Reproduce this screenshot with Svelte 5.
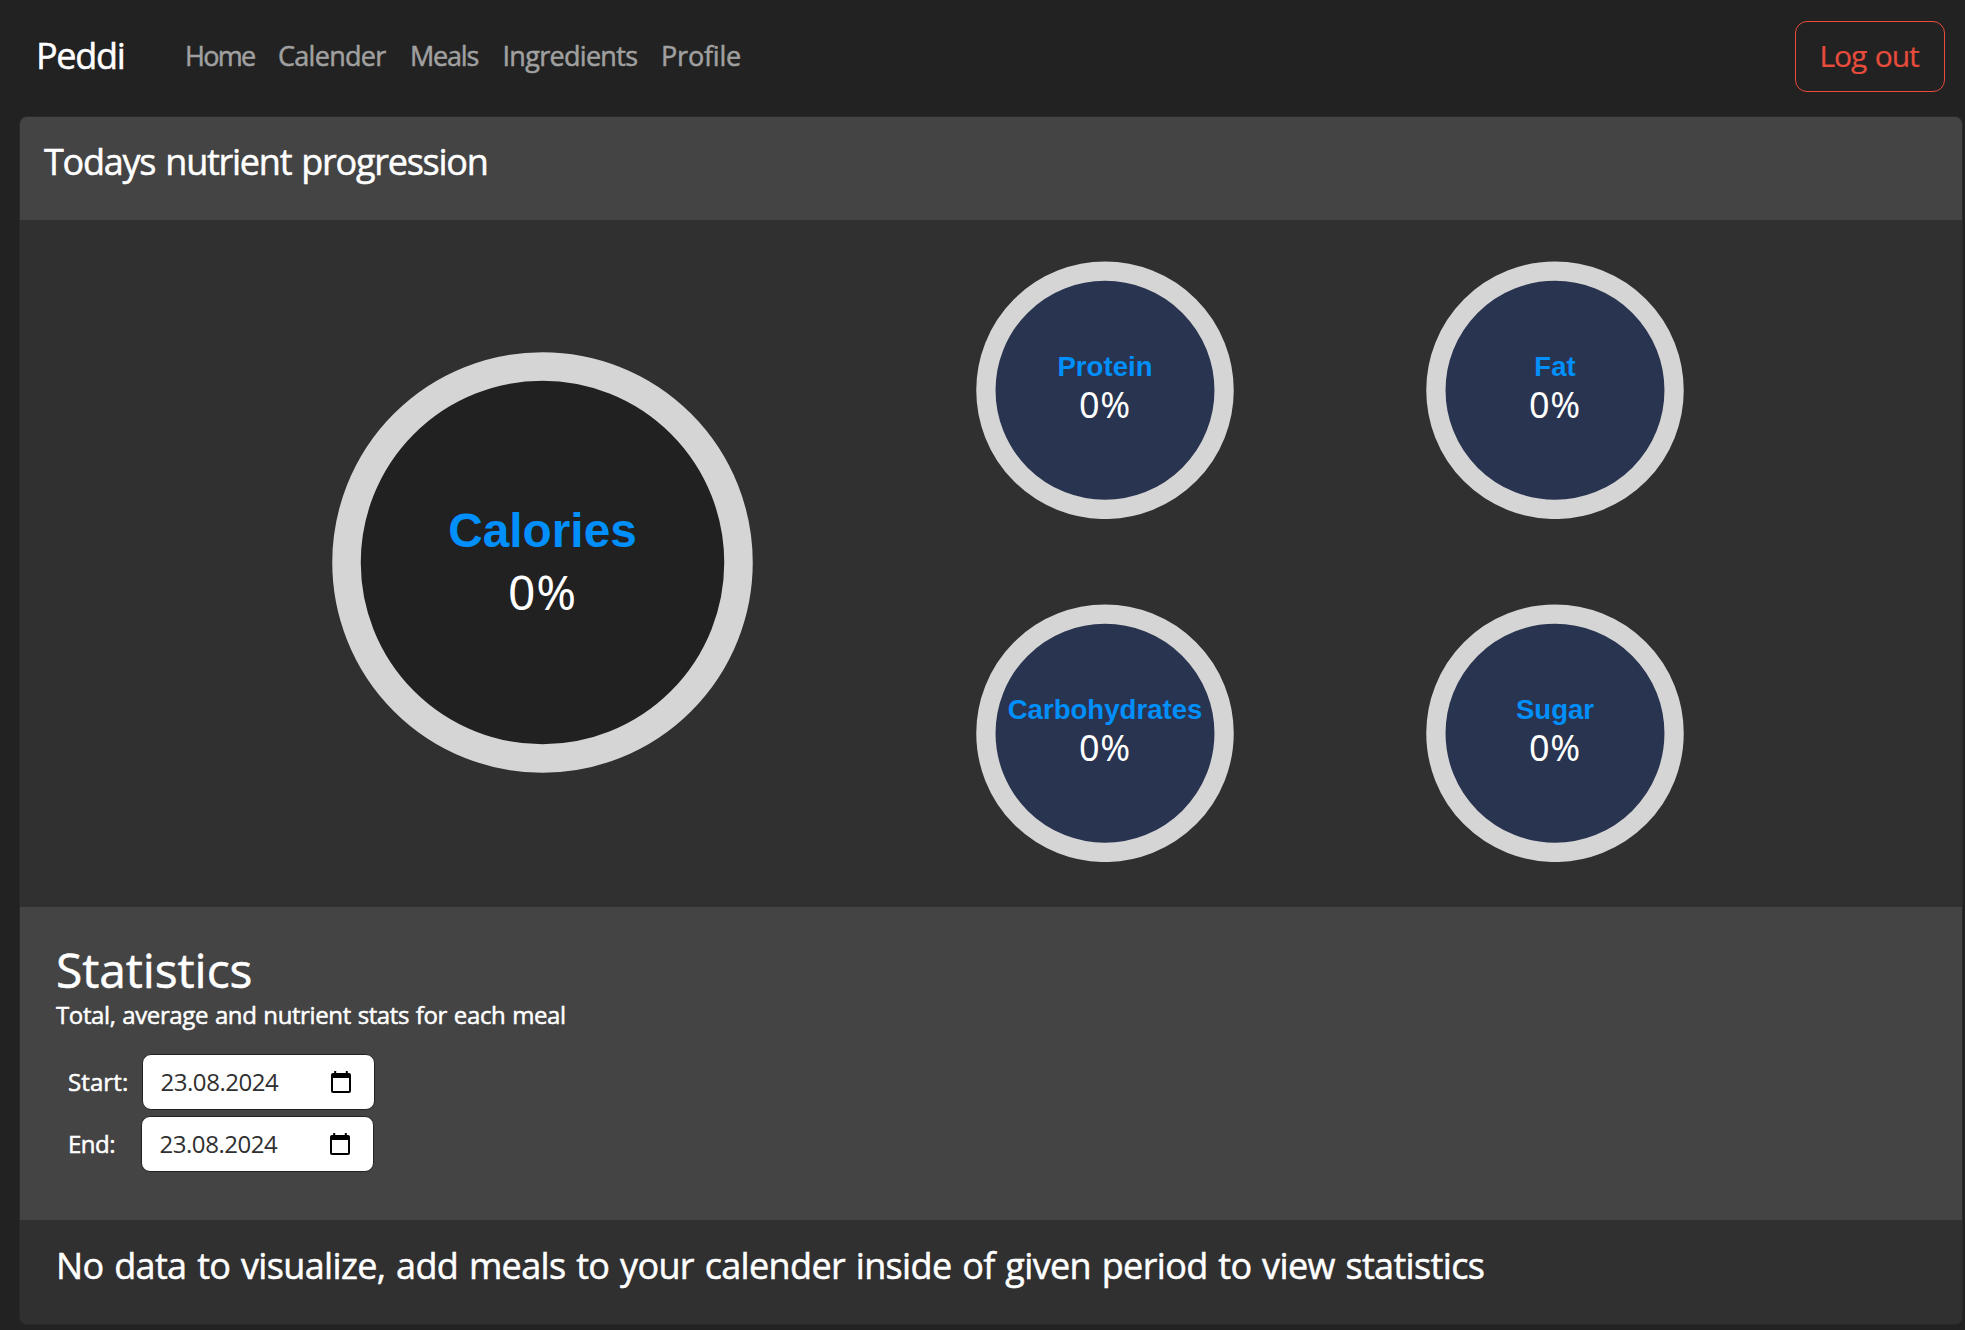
<script>
  const links = ['Home', 'Calender', 'Meals', 'Ingredients', 'Profile'];
  const nutrients = ['Protein', 'Fat', 'Carbohydrates', 'Sugar'];
  const dates = [
    { label: 'Start:', id: 'start', value: '23.08.2024' },
    { label: 'End:', id: 'end', value: '23.08.2024' }
  ];
</script>

<nav class="navbar">
  <a class="brand" href="#home">Peddi</a>
  <div class="links">
    {#each links as link}
      <a class={link.toLowerCase()} href="#{link.toLowerCase()}">{link}</a>
    {/each}
  </div>
  <button class="logout" type="button">Log out</button>
</nav>

<main class="card">
  <header class="card-header">
    <h2>Todays nutrient progression</h2>
  </header>

  <section class="charts">
    <svg class="ring main-ring" width="421" height="421" viewBox="0 0 421 421">
      <circle class="core dark" cx="210.5" cy="210.5" r="182" />
      <circle class="track wide" cx="210.5" cy="210.5" r="196" />
      <text class="name" x="210.5" y="194.7">Calories</text>
      <text class="value" x="210.5" y="257.7">0%</text>
    </svg>
    <div class="small-rings">
      {#each nutrients as name}
        <svg class="ring small" width="258" height="258" viewBox="0 0 258 258">
          <circle class="core blue" cx="129" cy="129.3" r="110" />
          <circle class="track" cx="129" cy="129.3" r="119.1" />
          <text class="name" x="129" y="115">{name}</text>
          <text class="value" x="129" y="156.7">0%</text>
        </svg>
      {/each}
    </div>
  </section>

  <section class="stats">
    <h1>Statistics</h1>
    <p>Total, average and nutrient stats for each meal</p>
    <div class="dates">
      {#each dates as date}
        <div class="date-row {date.id}">
          <span class="label">{date.label}</span>
          <div class="date-input">
            <span>{date.value}</span>
            <svg width="20" height="22" viewBox="0 0 20 22">
              <path
                fill-rule="evenodd"
                d="M3.200 0h2v2h9.600V0h2v2H18a2 2 0 0 1 2 2V20a2 2 0 0 1-2 2H2a2 2 0 0 1-2-2V4a2 2 0 0 1 2-2h1.200zM2 7V20H18V7z"
              />
            </svg>
          </div>
        </div>
      {/each}
    </div>
  </section>

  <footer class="message">
    <h2>No data to visualize, add meals to your calender inside of given period to view statistics</h2>
  </footer>
</main>

<style>
  :global(body) {
    background: #222;
    color: #fff;
    font-family: 'Trebuchet MS', 'Open Sans', sans-serif;
  }

  h1,
  h2,
  p {
    margin: 0;
    font-weight: 400;
  }

  /* Slightly sturdier strokes for light text on dark panels */
  h1,
  h2,
  p,
  .brand,
  .links,
  .label {
    -webkit-text-stroke: 0.5px currentColor;
  }

  a {
    text-decoration: none;
  }

  .navbar {
    box-sizing: border-box;
    display: flex;
    align-items: center;
    height: 116px;
    padding: 0 20px 6px 36px;
  }

  .brand {
    width: 149px;
    color: #fff;
    font-size: 36px;
    letter-spacing: -1.3px;
  }

  .links {
    display: flex;
    flex: 1;
    font-size: 27px;
    letter-spacing: -0.7px;
  }

  .links a {
    color: #a0a0a0;
  }

  .home {
    width: 93px;
    letter-spacing: -1.7px;
  }

  .calender {
    width: 132px;
  }

  .meals {
    width: 92.500px;
    letter-spacing: -1.2px;
  }

  .ingredients {
    width: 158.500px;
  }

  .profile {
    letter-spacing: -0.2px;
  }

  .logout {
    box-sizing: border-box;
    width: 150px;
    height: 71px;
    margin-top: 3px;
    padding: 0 2px 3px 0;
    border: 1px solid #e74c3c;
    border-radius: 12px;
    background: transparent;
    color: #e74c3c;
    font-family: inherit;
    font-size: 30px;
    letter-spacing: -1.1px;
    word-spacing: 2px;
    -webkit-text-stroke: 0.2px currentColor;
  }

  .card {
    box-sizing: border-box;
    width: 1944px;
    height: 1208.500px;
    margin-left: 19px;
    overflow: hidden;
    border: 1px solid #292929;
    border-radius: 8px;
    background: #303030;
  }

  .card-header {
    box-sizing: border-box;
    height: 103px;
    padding: 23px 24px;
    background: #444;
  }

  h2 {
    font-size: 36px;
    line-height: 44px;
    white-space: nowrap;
  }

  .card-header h2 {
    letter-spacing: -1.250px;
    word-spacing: 2px;
  }

  .charts {
    box-sizing: border-box;
    display: flex;
    gap: 223px;
    height: 687px;
    padding: 41px 0 0 312px;
  }

  .ring {
    display: block;
  }

  .main-ring {
    margin-top: 91px;
  }

  .small-rings {
    display: grid;
    grid-template-columns: repeat(2, 258px);
    grid-template-rows: repeat(2, 258px);
    gap: 85px 192px;
  }

  .core.dark {
    fill: #212121;
  }

  .core.blue {
    fill: #293450;
  }

  .track {
    fill: none;
    stroke: #d5d5d5;
    stroke-width: 19.300px;
  }

  .track.wide {
    stroke-width: 28.500px;
  }

  text {
    text-anchor: middle;
  }

  .name {
    fill: #008ffb;
    font: 700 47.800px 'Liberation Sans', sans-serif;
  }

  .value {
    fill: #fff;
    font: 400 48px 'Noto Sans', sans-serif;
    letter-spacing: 0.800px;
  }

  .small .name {
    font-size: 27.600px;
  }

  .small .value {
    font-size: 36px;
  }

  .stats {
    box-sizing: border-box;
    height: 313px;
    padding: 35px 36px 0;
    background: #444;
  }

  h1 {
    font-size: 48px;
    line-height: 56px;
    letter-spacing: -0.100px;
  }

  .stats p {
    margin-top: -1px;
    font-size: 24px;
    line-height: 36px;
    letter-spacing: -0.390px;
    word-spacing: 1px;
  }

  .dates {
    display: grid;
    gap: 6px;
    margin-top: 21px;
    padding-left: 12px;
    font-size: 24px;
  }

  .date-row {
    display: flex;
    align-items: center;
  }

  .label {
    width: 73.500px;
    margin-top: -1px;
    letter-spacing: 0.100px;
  }

  .end .label {
    width: 72.500px;
    letter-spacing: -0.500px;
  }

  .date-input {
    box-sizing: border-box;
    display: flex;
    align-items: center;
    justify-content: space-between;
    width: 233.500px;
    height: 56px;
    padding: 0 23px 1px 18px;
    border: 1px solid #222;
    border-radius: 9px;
    background: #fff;
    color: #303030;
    letter-spacing: -0.460px;
  }

  .message {
    padding: 24px 36px;
  }

  .message h2 {
    letter-spacing: -0.650px;
    word-spacing: 2px;
  }
</style>
